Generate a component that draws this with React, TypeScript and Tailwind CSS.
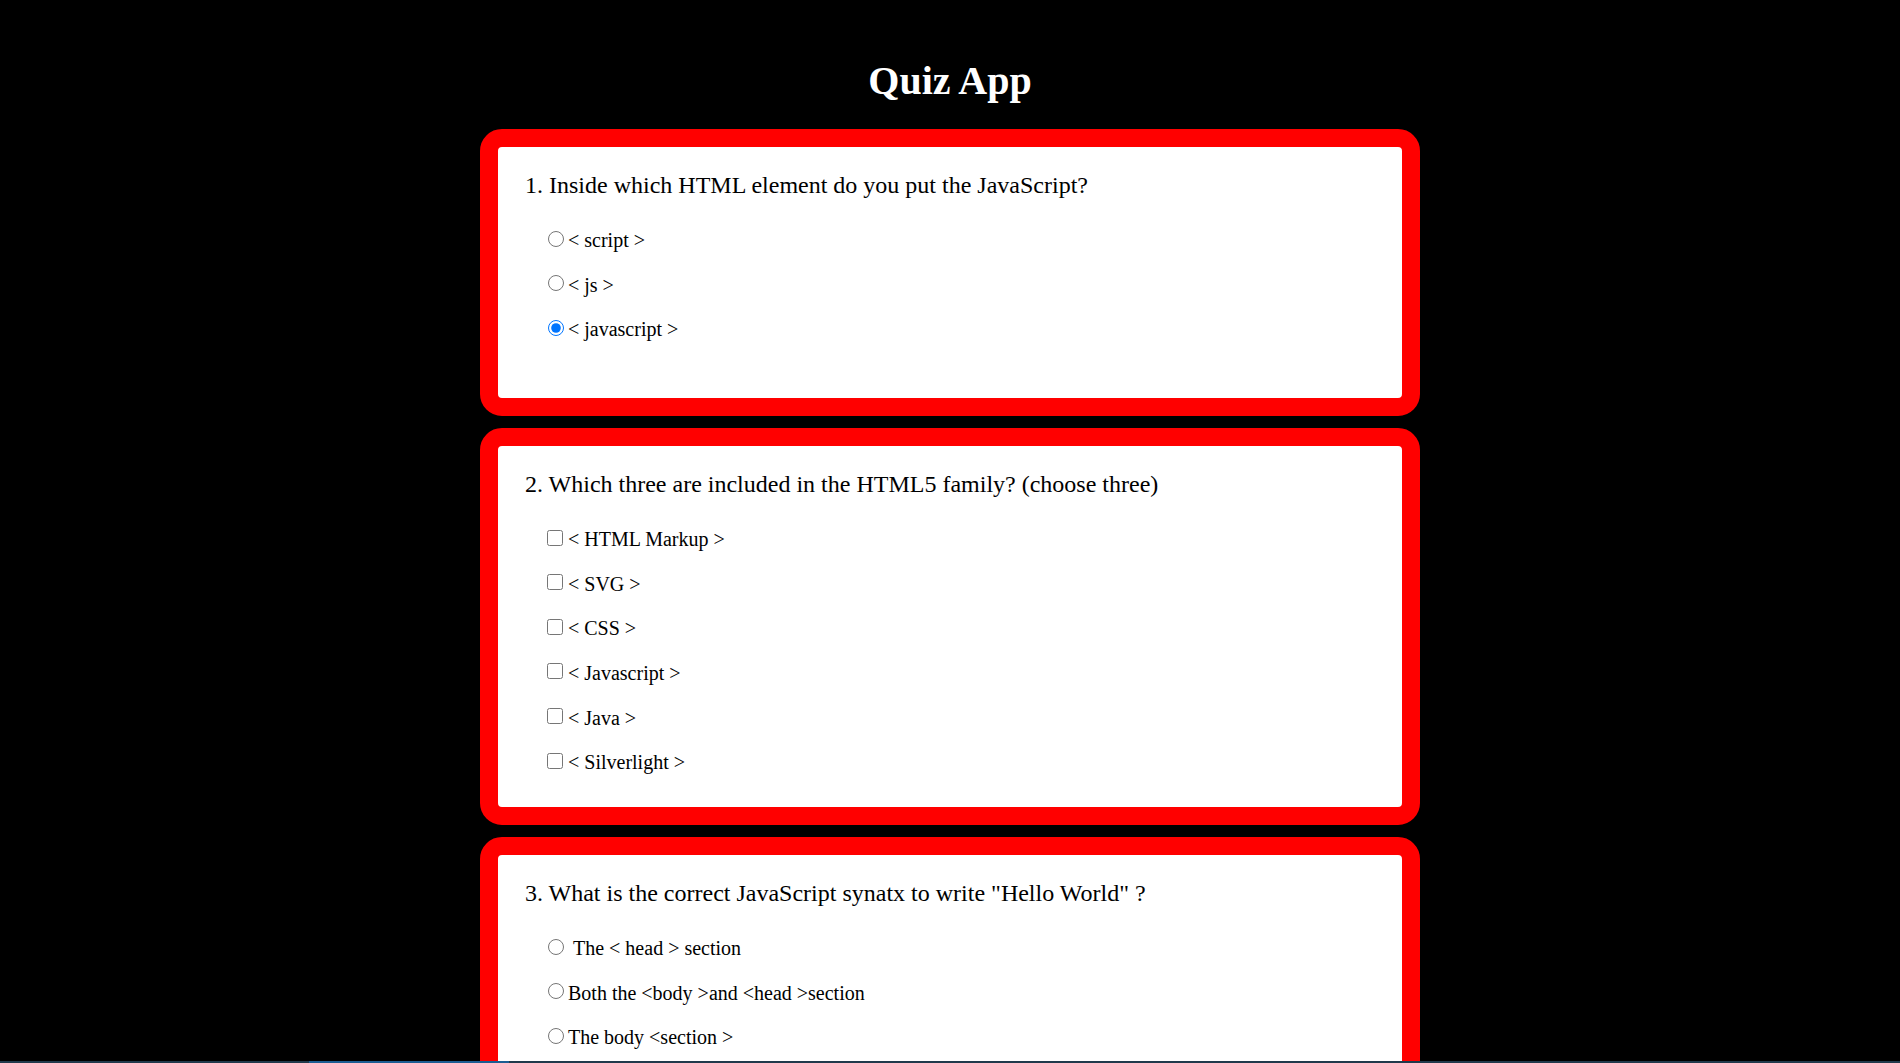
import React from 'react';

type Question = {
  id: number;
  text: string;
  type: 'radio' | 'checkbox';
  options: string[];
  checked?: number;
  padBottom: string;
};

const questions: Question[] = [
  {
    id: 1,
    text: '1. Inside which HTML element do you put the JavaScript?',
    type: 'radio',
    options: ['< script >', '< js >', '< javascript >'],
    checked: 2,
    padBottom: 'pb-[57px]',
  },
  {
    id: 2,
    text: '2. Which three are included in the HTML5 family? (choose three)',
    type: 'checkbox',
    options: ['< HTML Markup >', '< SVG >', '< CSS >', '< Javascript >', '< Java >', '< Silverlight >'],
    padBottom: 'pb-[33px]',
  },
  {
    id: 3,
    text: '3. What is the correct JavaScript synatx to write "Hello World" ?',
    type: 'radio',
    options: ['\u00a0The < head > section', 'Both the <body >and <head >section', 'The body <section >'],
    padBottom: 'pb-[57px]',
  },
];

function QuestionCard({ q }: { q: Question }) {
  return (
    <div className={`rounded-[22px] border-[18px] border-[#ff0000] bg-white px-[27px] pt-[24px] ${q.padBottom}`}>
      <p className="text-[24px] leading-[28px] text-black">{q.text}</p>
      <div className="ml-[18px] mt-[30px] flex flex-col gap-[21.6px]">
        {q.options.map((opt, i) => (
          <label key={i} className="flex items-center text-[20px] leading-[23px] text-black">
            {q.type === 'radio' ? (
              <input
                type="radio"
                name={`q${q.id}`}
                defaultChecked={q.checked === i}
                className="ml-[5px] mr-[4px] h-[16px] w-[16px] -translate-y-[2px]"
              />
            ) : (
              <input
                type="checkbox"
                name={`q${q.id}`}
                className="ml-[4px] mr-[5px] h-[16px] w-[16px] -translate-y-[2px]"
              />
            )}
            <span>{opt}</span>
          </label>
        ))}
      </div>
    </div>
  );
}

export default function App() {
  return (
    <div className="min-h-screen bg-black pb-[40px] font-['Liberation_Serif',serif]">
      <h1 className="pt-[59px] text-center text-[40px] font-bold leading-[44px] text-white">Quiz App</h1>

      <div className="mx-auto mt-[26px] flex w-[940px] flex-col gap-[12px]">
        {questions.map((q) => (
          <QuestionCard key={q.id} q={q} />
        ))}
      </div>

      {/* taskbar edge at the very bottom of the shot */}
      <div className="fixed bottom-0 left-0 right-0 flex h-[2px]">
        <div className="w-[309px] bg-[#203a4c]" />
        <div className="w-[200px] bg-[#1b5d92]" />
        <div className="flex-1 bg-[#203a4c]" />
      </div>
    </div>
  );
}
